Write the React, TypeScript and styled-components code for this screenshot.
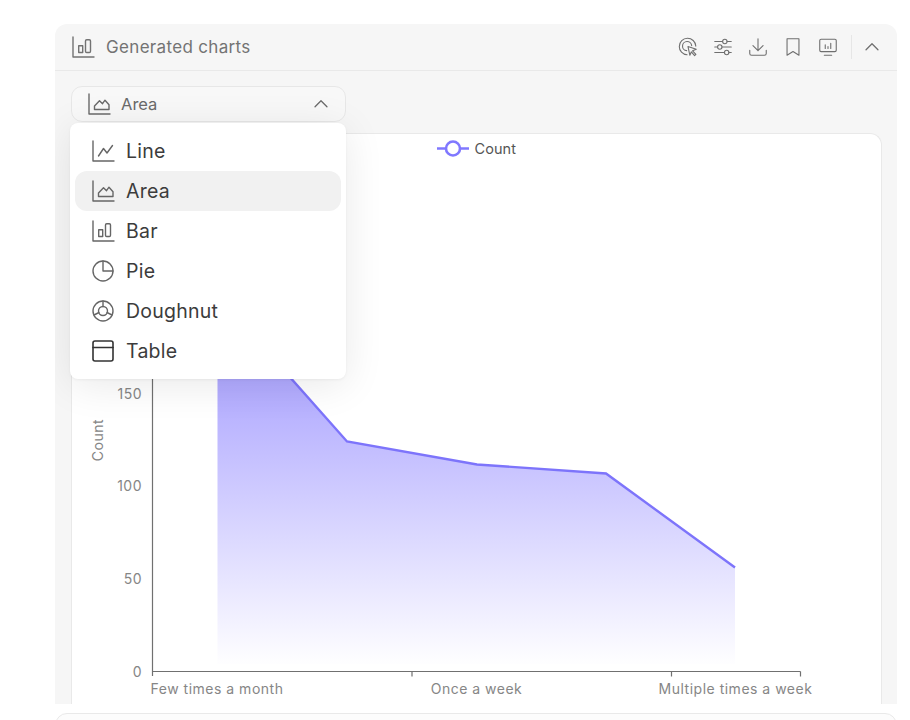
import React from "react"
import styled, { createGlobalStyle } from "styled-components"

const GlobalStyle = createGlobalStyle`
  html, body {
    margin: 0;
    background: #ffffff;
    font-family: Inter, "Liberation Sans", sans-serif;
    overflow: hidden;
  }
`

const Page = styled.div`
  width: 910px;
  height: 720px;
  padding: 24px 13px 0 55px;
  box-sizing: border-box;
  overflow: hidden;
`

const Panel = styled.section`
  height: 680px;
  display: flex;
  flex-direction: column;
  background: #f6f6f6;
  border-radius: 12px 12px 0 0;
  overflow: hidden;
`

const Header = styled.header`
  height: 46px;
  flex: none;
  display: flex;
  align-items: center;
  justify-content: space-between;
  padding: 0 14px 0 16px;
  border-bottom: 1px solid #e9e9e9;
`

const HeaderTitle = styled.div`
  display: flex;
  align-items: center;
  gap: 11px;
  font-size: 17px;
  letter-spacing: 0.33px;
  color: #737373;
`

const Actions = styled.div`
  display: flex;
  align-items: center;
  gap: 13px;
  color: #6f6f6f;
`

const Divider = styled.span`
  width: 1px;
  height: 24px;
  background: #e6e6e6;
  margin: 0 -4px 0 -1px;
`

const Body = styled.div`
  flex: 1;
  min-height: 0;
  display: flex;
  flex-direction: column;
  gap: 11px;
  padding: 15px 15px 0 16px;
`

const SelectWrap = styled.div`
  position: relative;
  width: 275px;
  flex: none;
`

const SelectBar = styled.div`
  height: 36px;
  box-sizing: border-box;
  display: flex;
  align-items: center;
  justify-content: space-between;
  padding: 0 13px 0 15px;
  background: #f8f8f8;
  border: 1px solid #e7e7e7;
  border-radius: 11px;
  color: #6a6a6a;
  font-size: 16.5px;
`

const SelectValue = styled.span`
  display: flex;
  align-items: center;
  gap: 10px;
`

const Menu = styled.ul`
  position: absolute;
  top: 37px;
  left: -1px;
  z-index: 2;
  width: 276px;
  height: 256px;
  box-sizing: border-box;
  margin: 0;
  padding: 8px 5px;
  list-style: none;
  background: #ffffff;
  border-radius: 8px;
  box-shadow: 0 6px 40px rgba(0, 0, 0, 0.09), 0 1px 3px rgba(0, 0, 0, 0.05);
`

const MenuItem = styled.li<{ $active?: boolean }>`
  height: 40px;
  box-sizing: border-box;
  display: flex;
  align-items: center;
  gap: 11px;
  padding: 0 16px 1px;
  border-radius: 12px;
  font-size: 19.5px;
  letter-spacing: 0.25px;
  color: #3c3c3c;
  background: ${(p) => (p.$active ? "#f1f1f1" : "transparent")};
`

const MenuGlyph = styled.span<{ $dark?: boolean }>`
  display: flex;
  color: ${(p) => (p.$dark ? "#333333" : "#666666")};
`

const ChartCard = styled.div`
  flex: 1;
  min-height: 0;
  background: #ffffff;
  border: 1px solid #e9e9e9;
  border-bottom: none;
  border-radius: 12px 12px 0 0;
  overflow: hidden;
`

const NextPanel = styled.div`
  height: 40px;
  margin-top: 9px;
  background: #fcfcfc;
  border: 1px solid #e9e9e9;
  border-radius: 12px 12px 0 0;
`

const ChartSvg = styled.svg`
  display: block;
  margin: 0 -1px;
`

const AxisText = styled.text`
  font-family: Inter, "Liberation Sans", sans-serif;
  font-size: 14px;
  letter-spacing: 0.5px;
  fill: #868686;
`

const LegendText = styled.text`
  font-family: Inter, "Liberation Sans", sans-serif;
  font-size: 14.5px;
  letter-spacing: 0.05px;
  fill: #555555;
`

type IconProps = { size?: number; sw?: number; children: React.ReactNode }

const Icon = ({ size = 24, sw = 1.4, children }: IconProps) => (
  <svg width={size} height={size} viewBox="0 0 24 24" fill="none" stroke="currentColor" strokeWidth={sw} strokeLinecap="round" strokeLinejoin="round">
    {children}
  </svg>
)

const LineIcon = () => (
  <Icon>
    <path d="M2 2v20h21" />
    <path d="M7.500 17l5-7.500 3.500 4.500 5.500-7.500" />
  </Icon>
)

const AreaIcon = () => (
  <Icon>
    <path d="M2 2v20h21" />
    <path d="M7.500 17.500V14L12.500 8.700l3 3 2.500-3.500 4 4.500v4.800z" />
  </Icon>
)

const BarIcon = () => (
  <Icon>
    <path d="M2 2v20h21" />
    <rect x="7.700" y="10.700" width="4" height="6.800" />
    <rect x="14.500" y="4.700" width="5" height="12.800" rx="1.200" />
  </Icon>
)

const PieIcon = () => (
  <Icon>
    <circle cx="12" cy="12" r="10" />
    <path d="M12 2v10h10" />
  </Icon>
)

const DoughnutIcon = () => (
  <Icon>
    <circle cx="12" cy="12" r="10" />
    <circle cx="12" cy="12" r="4.500" />
    <path d="M12 2v5.500M16 13.500l5 2.500M8 13.500l-5 2.500" />
  </Icon>
)

const TableIcon = () => (
  <Icon sw={1.6}>
    <rect x="2" y="2" width="20" height="20" rx="2" />
    <path d="M2 8.500h20" />
  </Icon>
)

const ChevronUp = ({ size = 22 }: { size?: number }) => (
  <Icon size={size} sw={1.4}>
    <path d="M5.500 15l6.500-6.500 6.500 6.500" />
  </Icon>
)

const options = [
  { name: "Line", icon: <LineIcon /> },
  { name: "Area", icon: <AreaIcon />, active: true },
  { name: "Bar", icon: <BarIcon /> },
  { name: "Pie", icon: <PieIcon /> },
  { name: "Doughnut", icon: <DoughnutIcon /> },
  { name: "Table", icon: <TableIcon />, dark: true },
]

const AreaChart = () => (
  <ChartSvg width="810" height="570" viewBox="71 134 810 570">
    <defs>
      <linearGradient id="areaFill" gradientUnits="userSpaceOnUse" x1="0" y1="295" x2="0" y2="662">
        <stop offset="0" stopColor="#7f74ff" stopOpacity="0.8" />
        <stop offset="1" stopColor="#7f74ff" stopOpacity="0.01" />
      </linearGradient>
    </defs>
    <path d="M437 148.500h32" stroke="#8078ff" strokeWidth="2.400" />
    <circle cx="453" cy="148.500" r="7" fill="#ffffff" stroke="#8078ff" strokeWidth="2.600" />
    <LegendText x="474.500" y="154">Count</LegendText>
    <path d="M217.500 664V295.500L347 441.500l130 23 129 9 129 94v96.500z" fill="url(#areaFill)" />
    <path d="M217.500 295.500L347 441.500l130 23 129 9 129 94" fill="none" stroke="#7d74fb" strokeWidth="2.400" />
    <path d="M152.500 200v476M152.500 671.500h648M412 671.500v5M671.500 671.500v5M800.500 671.500v5" fill="none" stroke="#707070" strokeWidth="1.200" />
    <AxisText x="142" y="677" textAnchor="end">0</AxisText>
    <AxisText x="142" y="584" textAnchor="end">50</AxisText>
    <AxisText x="142" y="491" textAnchor="end">100</AxisText>
    <AxisText x="142" y="399" textAnchor="end">150</AxisText>
    <AxisText x="103" y="440" textAnchor="middle" transform="rotate(-90 103 440)">Count</AxisText>
    <AxisText x="217" y="694" textAnchor="middle">Few times a month</AxisText>
    <AxisText x="476.500" y="694" textAnchor="middle">Once a week</AxisText>
    <AxisText x="735.500" y="694" textAnchor="middle">Multiple times a week</AxisText>
  </ChartSvg>
)

export default function App() {
  return (
    <Page>
      <GlobalStyle />
      <Panel>
        <Header>
          <HeaderTitle>
            <BarIcon />
            Generated charts
          </HeaderTitle>
          <Actions>
            <Icon size={22} sw={1.2}>
              <path d="M11 20.500A9 9 0 1 1 20.500 11" />
              <path d="M10.500 16a5 5 0 1 1 5.500-5.500" />
              <path d="M12 11.500l9 3-4 1.600 3.600 4-1.400 1.300-3.600-4-1.600 3.600z" />
            </Icon>
            <Icon size={22} sw={1.2}>
              <path d="M3 6h8.500M16.500 6H21M3 12h3M11 12h10M3 18h10.500M18.500 18H21" />
              <circle cx="14" cy="6" r="2.400" />
              <circle cx="8.500" cy="12" r="2.400" />
              <circle cx="16" cy="18" r="2.400" />
            </Icon>
            <Icon size={22} sw={1.2}>
              <path d="M12 3v13M6.500 10.500L12 16l5.500-5.500" />
              <path d="M3 15.500V19a2 2 0 0 0 2 2h14a2 2 0 0 0 2-2v-3.500" />
            </Icon>
            <Icon size={22} sw={1.2}>
              <path d="M5.500 3h13v18L12 17l-6.500 4z" />
            </Icon>
            <Icon size={22} sw={1.2}>
              <rect x="3" y="3.500" width="18" height="13.500" rx="1.500" />
              <path d="M8 21h8M9 13.500V9.500M12 13.500v-2M15 13.500V8" />
            </Icon>
            <Divider />
            <ChevronUp />
          </Actions>
        </Header>
        <Body>
          <SelectWrap>
            <SelectBar>
              <SelectValue>
                <AreaIcon />
                Area
              </SelectValue>
              <ChevronUp />
            </SelectBar>
            <Menu>
              {options.map((o) => (
                <MenuItem key={o.name} $active={o.active}>
                  <MenuGlyph $dark={o.dark}>{o.icon}</MenuGlyph>
                  {o.name}
                </MenuItem>
              ))}
            </Menu>
          </SelectWrap>
          <ChartCard>
            <AreaChart />
          </ChartCard>
        </Body>
      </Panel>
      <NextPanel />
    </Page>
  )
}
